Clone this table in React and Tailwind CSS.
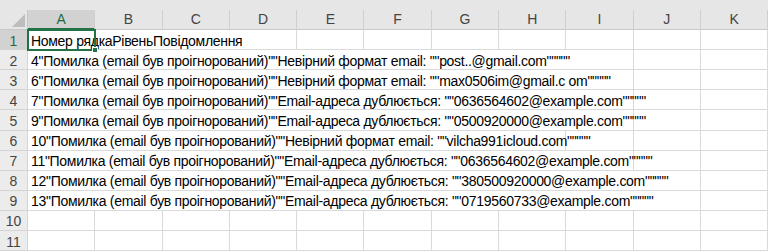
import React from 'react';

const cols = ['A', 'B', 'C', 'D', 'E', 'F', 'G', 'H', 'I', 'J', 'K'];

const rows = [
    { text: 'Номер рядкаРівеньПовідомлення', span: 4 },
    { text: '4"Помилка (email був проігнорований)""Невірний формат email: ""post..@gmail.com"""""', span: 9 },
    { text: '6"Помилка (email був проігнорований)""Невірний формат email: ""max0506im@gmail.c om"""""', span: 9 },
    { text: '7"Помилка (email був проігнорований)""Email-адреса дублюється: ""0636564602@example.com"""""', span: 9 },
    { text: '9"Помилка (email був проігнорований)""Email-адреса дублюється: ""0500920000@example.com"""""', span: 9 },
    { text: '10"Помилка (email був проігнорований)""Невірний формат email: ""vilcha991icloud.com"""""', span: 8 },
    { text: '11"Помилка (email був проігнорований)""Email-адреса дублюється: ""0636564602@example.com"""""', span: 9 },
    { text: '12"Помилка (email був проігнорований)""Email-адреса дублюється: ""380500920000@example.com"""""', span: 10 },
    { text: '13"Помилка (email був проігнорований)""Email-адреса дублюється: ""0719560733@example.com"""""', span: 10 },
    { text: '', span: 1 },
    { text: '', span: 1 },
];

const spanClass = {
    1: 'col-span-1', 4: 'col-span-4', 8: 'col-span-8', 9: 'col-span-9', 10: 'col-span-10',
};

const App = () => {
    return (
        <div className="w-[768px] h-[252px] overflow-hidden bg-white font-['Liberation_Sans',Arial,sans-serif] text-[14px]">
            <div className="h-[10px] bg-[#e6e6e6]" />
            <div className="grid grid-cols-[28px_repeat(11,67.3px)] auto-rows-[20.1px]">
                {/* column header row */}
                <div className="h-[20px] bg-[#e6e6e6] border-r border-b border-[#c8c8c8] flex items-end justify-end pr-[2px] pb-[2px]">
                    <svg width="13" height="13" viewBox="0 0 13 13"><polygon points="13,0 13,13 0,13" fill="#bdbdbd" /></svg>
                </div>
                {cols.map(c => (
                    <div
                        key={c}
                        className={`h-[20px] flex items-center justify-center border-r border-[#cfcfcf] ${c === 'A' ? 'bg-[#d2d2d2] text-[#1e6b41] border-b-2 border-b-[#217346]' : 'bg-[#e6e6e6] text-[#444] border-b border-b-[#c8c8c8]'}`}
                    >
                        {c}
                    </div>
                ))}

                {rows.map((r, i) => (
                    <React.Fragment key={i}>
                        <div className={`flex items-center justify-center pt-[3px] border-r border-b border-[#d4d4d4] ${i === 0 ? 'bg-[#d2d2d2] text-[#1e6b41]' : 'bg-[#ececec] text-[#444]'}`}>
                            {i + 1}
                        </div>
                        <div className={`${spanClass[r.span]} relative flex items-center pl-[3px] pt-[3px] whitespace-nowrap border-r border-b border-[#dadada] text-black tracking-[-0.3px]`}>
                            {r.text}
                            {i === 0 && (
                                <div className="absolute left-[-1px] top-[-1px] w-[69px] h-[22px] border-2 border-[#217346]">
                                    <div className="absolute right-[-4px] bottom-[-4px] w-[6px] h-[6px] bg-[#217346] border border-white" />
                                </div>
                            )}
                        </div>
                        {Array.from({ length: 11 - r.span }).map((_, j) => (
                            <div key={j} className="border-r border-b border-[#dadada]" />
                        ))}
                    </React.Fragment>
                ))}
            </div>
        </div>
    );
};

export default App;
